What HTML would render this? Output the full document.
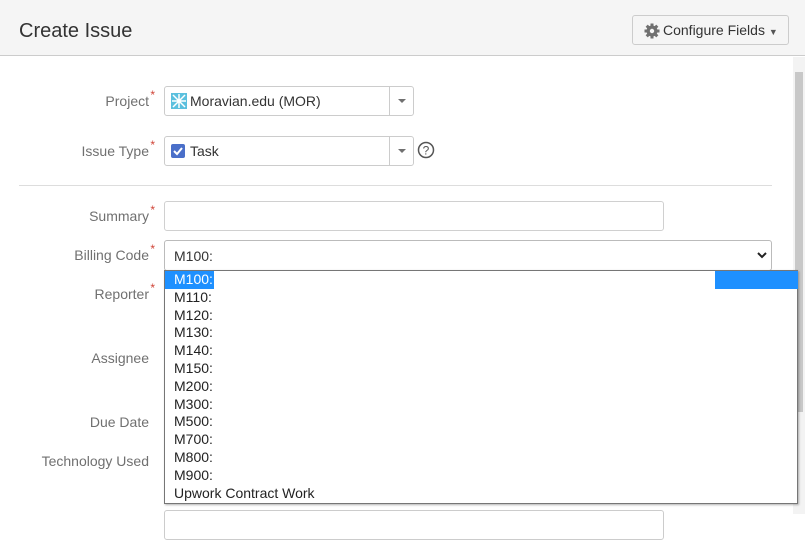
<!DOCTYPE html>
<html><head><style>
*{box-sizing:border-box;margin:0;padding:0}
body{width:805px;height:514px;overflow:hidden;background:#fff;font-family:"Liberation Sans",Arial,sans-serif;color:#333;position:relative;font-size:14px}
.hdr{position:absolute;left:0;top:0;width:805px;height:56px;background:#f5f5f5;border-bottom:1px solid #ccc}
.hdr h1{position:absolute;left:19px;top:20px;font-size:20px;font-weight:normal;color:#333}
.cfg{position:absolute;left:632px;top:15px;width:157px;height:30px;border:1px solid #ccc;border-radius:3px;background:#f5f5f5;font-size:14px;padding:6px 0 0 30px;color:#333}
.lbl{position:absolute;right:656px;font-size:14px;color:#707070;text-align:right}
.lbl sup{color:#d04437;font-size:12px;position:absolute;right:-6px;top:-5px}
.box{position:absolute;border:1px solid #ccc;border-radius:3px;background:#fff}
.sel .arr{position:absolute;right:0;top:0;width:24px;height:100%;border-left:1px solid #ccc}
.sel .arr:after{content:"";position:absolute;left:8px;top:12px;border:4px solid transparent;border-top:4px solid #707070}
.dd{position:absolute;left:164px;top:270px;width:634px;height:234px;border:1px solid #767676;background:#fff;box-shadow:1px 1px 2px rgba(0,0,0,.3)}
.dd div{height:17.8px;line-height:17.8px;padding-left:9px;font-size:14px;color:#222}
.sb{position:absolute;left:793px;top:57px;width:12px;height:457px;background:#f3f3f3}
.sb .th{position:absolute;left:2px;top:15px;width:8px;height:340px;background:#c8c8c8}
</style></head><body>
<div class="hdr"><h1>Create Issue</h1>
<div class="cfg"><svg style="position:absolute;left:11px;top:7px" width="16" height="16" viewBox="0 0 16 16"><g fill="#707070"><circle cx="8" cy="8" r="5.5"/><rect x="6.5" y="0.5" width="3" height="15"/><rect x="0.5" y="6.5" width="15" height="3"/><rect x="6.5" y="0.5" width="3" height="15" transform="rotate(45 8 8)"/><rect x="6.5" y="0.5" width="3" height="15" transform="rotate(-45 8 8)"/></g><circle cx="8" cy="8" r="2.2" fill="#f5f5f5"/></svg>Configure Fields <span style="font-size:9px;color:#555">▼</span></div>
</div>
<div class="sb"><div class="th"></div></div>

<div class="lbl" style="top:93px">Project<sup>*</sup></div>
<div class="box sel" style="left:164px;top:86px;width:250px;height:30px"><svg style="position:absolute;left:6px;top:6px" width="16" height="16"><rect width="16" height="16" fill="#5bc0de"/><path d="M2 2L14 14M14 2L2 14M8 1V15M1 8H15" stroke="#fff" stroke-width="1.5"/></svg><span style="position:absolute;left:25px;top:6px">Moravian.edu (MOR)</span><div class="arr"></div></div>

<div class="lbl" style="top:143px">Issue Type<sup>*</sup></div>
<div class="box sel" style="left:164px;top:136px;width:250px;height:30px"><svg style="position:absolute;left:6px;top:7px" width="14" height="14"><rect width="14" height="14" rx="2" fill="#4a6fc9"/><path d="M3 7L6 10L11 4" stroke="#fff" stroke-width="2" fill="none"/></svg><span style="position:absolute;left:25px;top:6px">Task</span><div class="arr"></div></div>
<svg style="position:absolute;left:417px;top:141px" width="18" height="18"><circle cx="9" cy="9" r="7.5" fill="none" stroke="#555" stroke-width="1.5"/><text x="9" y="13.5" font-size="12" text-anchor="middle" fill="#555" font-family="Liberation Sans">?</text></svg>

<div style="position:absolute;left:19px;top:185px;width:753px;height:1px;background:#ddd"></div>

<div class="lbl" style="top:208px">Summary<sup>*</sup></div>
<div class="box" style="left:164px;top:201px;width:500px;height:30px;border-color:#d0d0d0"></div>

<div class="lbl" style="top:247px">Billing Code<sup>*</sup></div>
<div class="box" style="left:164px;top:240px;width:608px;height:31px;border-color:#bbb"><span style="position:absolute;left:9px;top:7px">M100:</span><svg style="position:absolute;right:4px;top:10px" width="10" height="8"><path d="M1 2L5 6L9 2" stroke="#222" stroke-width="2" fill="none"/></svg></div>

<div class="lbl" style="top:286px">Reporter<sup>*</sup></div>
<div class="lbl" style="top:350px">Assignee</div>
<div class="lbl" style="top:414px">Due Date</div>
<div class="lbl" style="top:453px">Technology Used</div>
<div class="box" style="left:164px;top:510px;width:500px;height:30px"></div>

<div class="dd">
<div style="background:#1e90ff;color:#fff;width:49px">M100:</div>
<div style="position:absolute;left:550px;top:0;width:83px;height:18px;background:#1e90ff;padding:0"></div>
<div>M110:</div><div>M120:</div><div>M130:</div><div>M140:</div><div>M150:</div><div>M200:</div><div>M300:</div><div>M500:</div><div>M700:</div><div>M800:</div><div>M900:</div><div>Upwork Contract Work</div>
</div>
</body></html>
